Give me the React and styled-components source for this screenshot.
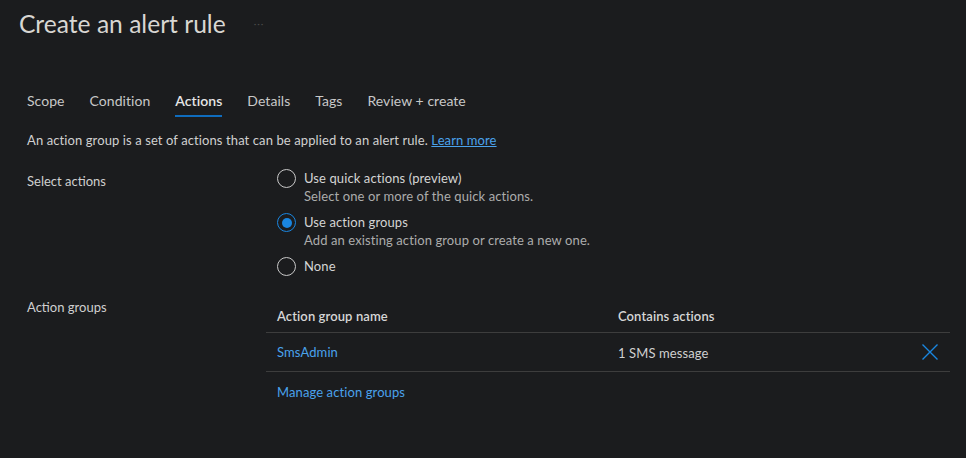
import React from 'react';
import styled, { createGlobalStyle } from 'styled-components';

const Global = createGlobalStyle`
  body {
    margin: 0;
    background: #1b1c1e;
    font-family: 'Lato', 'Noto Sans', sans-serif;
    color: #d2d2d2;
  }
`;

const Page = styled.div`
  width: 966px;
  height: 458px;
  background: #1b1c1e;
  overflow: hidden;
`;

const Header = styled.div`
  display: flex;
  align-items: center;
  padding: 8px 0 0 19px;
  height: 30px;
`;

const Title = styled.h1`
  margin: 0;
  font-size: 24.6px;
  font-weight: 400;
  color: #d8d6d2;
`;

const More = styled.span`
  margin-left: 28px;
  color: #4a4a4a;
  font-size: 10px;
  letter-spacing: 1px;
`;

const Body = styled.div`
  padding: 0 27px;
`;

const Tabs = styled.nav`
  display: flex;
  gap: 25px;
  margin-top: 54px;
`;

const Tab = styled.div`
  font-size: 14px;
  letter-spacing: 0.05px;
  color: ${(p) => (p.active ? '#e6e6e6' : '#c8c8c8')};
  font-weight: ${(p) => (p.active ? 600 : 400)};
  padding-bottom: 6px;
  border-bottom: 2px solid ${(p) => (p.active ? '#0f6cbd' : 'transparent')};
`;

const Intro = styled.p`
  margin: 15px 0 0;
  font-size: 13px;
  letter-spacing: 0.1px;
  color: #d0d0d0;
`;

const Link = styled.a`
  color: #4aa2ec;
  text-decoration: ${(p) => (p.underline ? 'underline' : 'none')};
  cursor: pointer;
`;

const Field = styled.div`
  display: grid;
  grid-template-columns: 250px 1fr;
  margin-top: ${(p) => p.top};
`;

const Label = styled.div`
  font-size: 13px;
  color: #cfcfcf;
  padding-top: ${(p) => p.pad || '0'};
`;

const Options = styled.div`
  display: flex;
  flex-direction: column;
  gap: 8px;
`;

const Option = styled.label`
  display: grid;
  grid-template-columns: 27px 1fr;
  font-size: 13px;
  letter-spacing: 0.1px;
`;

const Circle = styled.span`
  width: 19px;
  height: 19px;
  border-radius: 50%;
  box-sizing: border-box;
  border: 1px solid ${(p) => (p.checked ? '#1a86e0' : '#c9c9c9')};
  display: flex;
  align-items: center;
  justify-content: center;
  &::after {
    content: '';
    display: ${(p) => (p.checked ? 'block' : 'none')};
    width: 10px;
    height: 10px;
    border-radius: 50%;
    background: #1a86e0;
  }
`;

const OptionText = styled.div`
  display: flex;
  flex-direction: column;
  line-height: 18px;
  color: #d4d4d4;
`;

const Hint = styled.span`
  color: #acacac;
`;

const Table = styled.div`
  margin-left: -11px;
  width: 684px;
  font-size: 13px;
  letter-spacing: 0.1px;
`;

const Row = styled.div`
  display: grid;
  grid-template-columns: 341px 1fr 28px;
  align-items: center;
  height: ${(p) => p.h};
  padding-left: 11px;
  border-bottom: 1px solid #3d3d3d;
`;

const HeadCell = styled.div`
  font-weight: 600;
  color: #d6d6d6;
  padding-top: 2px;
`;

const Cell = styled.div`
  color: #d0d0d0;
  padding-top: 2px;
`;

const Remove = styled.button`
  background: none;
  border: 0;
  padding: 0;
  display: flex;
  cursor: pointer;
`;

const Manage = styled.div`
  padding: 12px 0 0 11px;
  font-size: 13px;
`;

const X = () => (
  <svg width="16" height="16" viewBox="0 0 16 16">
    <path d="M0.5 0.5 L15.5 15.5 M15.5 0.5 L0.5 15.5" stroke="#1a86e0" strokeWidth="1.4" fill="none" />
  </svg>
);

const Radio = ({ checked, label, hint }) => (
  <Option>
    <Circle checked={checked} />
    <OptionText>
      <span>{label}</span>
      {hint && <Hint>{hint}</Hint>}
    </OptionText>
  </Option>
);

const tabs = ['Scope', 'Condition', 'Actions', 'Details', 'Tags', 'Review + create'];

export default function App() {
  return (
    <Page>
      <Global />
      <Header>
        <Title>Create an alert rule</Title>
        <More>···</More>
      </Header>
      <Body>
        <Tabs>
          {tabs.map((t) => (
            <Tab key={t} active={t === 'Actions'}>{t}</Tab>
          ))}
        </Tabs>
        <Intro>
          An action group is a set of actions that can be applied to an alert rule.{' '}
          <Link underline>Learn more</Link>
        </Intro>
        <Field top="21px">
          <Label pad="4px">Select actions</Label>
          <Options>
            <Radio label="Use quick actions (preview)" hint="Select one or more of the quick actions." />
            <Radio checked label="Use action groups" hint="Add an existing action group or create a new one." />
            <Radio label="None" />
          </Options>
        </Field>
        <Field top="21px">
          <Label pad="2px">Action groups</Label>
          <Table>
            <Row h="35px">
              <HeadCell>Action group name</HeadCell>
              <HeadCell>Contains actions</HeadCell>
              <span />
            </Row>
            <Row h="38px">
              <Link>SmsAdmin</Link>
              <Cell>1 SMS message</Cell>
              <Remove aria-label="Remove"><X /></Remove>
            </Row>
            <Manage>
              <Link>Manage action groups</Link>
            </Manage>
          </Table>
        </Field>
      </Body>
    </Page>
  );
}
